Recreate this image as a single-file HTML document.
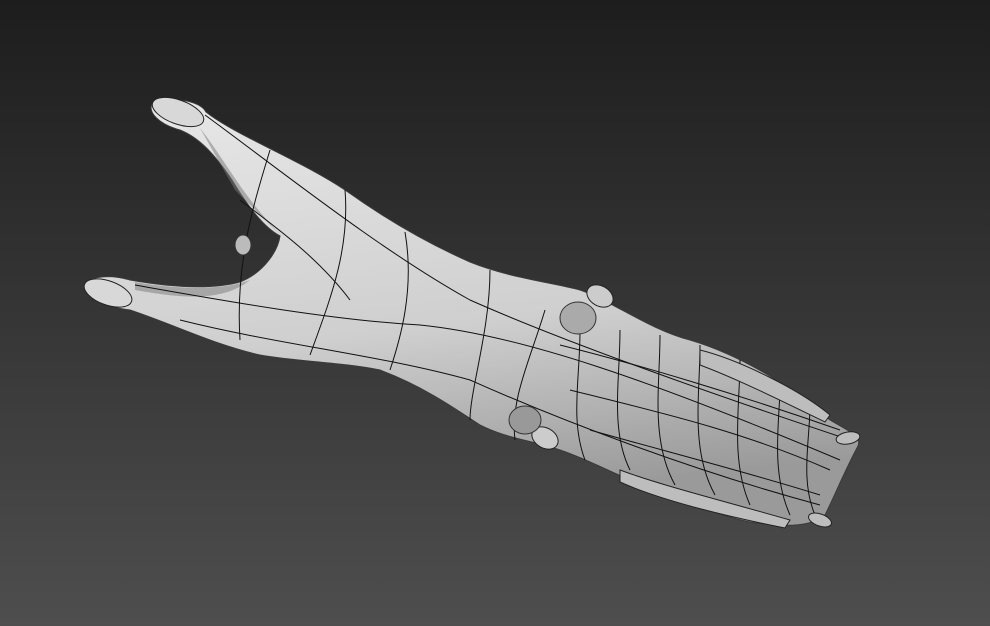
<!DOCTYPE html>
<html><head><meta charset="utf-8"><style>
html,body{margin:0;padding:0;width:990px;height:626px;overflow:hidden;background:#333}
svg{display:block}
</style></head><body>
<svg width="990" height="626" viewBox="0 0 990 626" xmlns="http://www.w3.org/2000/svg">
<defs>
<linearGradient id="bg" x1="0" y1="0" x2="0" y2="1">
<stop offset="0" stop-color="#1d1d1d"/><stop offset="1" stop-color="#4e4e4e"/>
</linearGradient>
<linearGradient id="sk" x1="0" y1="0" x2="0.2" y2="1">
<stop offset="0" stop-color="#e8e8e8"/><stop offset="0.6" stop-color="#cfcfcf"/><stop offset="1" stop-color="#9a9a9a"/>
</linearGradient>
</defs>
<rect width="990" height="626" fill="url(#bg)"/>
<path d="M152,104 C170,96 200,100 206,112 C235,135 300,160 345,190 C380,215 420,240 470,262 C510,278 550,282 580,290 C610,300 650,330 690,340 C740,355 790,385 830,420 C850,432 862,436 858,446 C845,470 835,495 825,515 C810,528 780,527 750,522 C715,515 685,500 650,488 C615,475 590,460 560,450 C530,440 505,438 480,425 C450,405 420,385 380,370 C340,362 300,362 260,355 C215,345 175,325 130,310 C110,308 88,300 84,287 C86,276 110,274 130,280 C170,287 210,290 240,282 C265,272 278,250 280,236 C265,228 250,210 232,180 C215,155 200,138 180,130 C158,124 148,112 152,104 Z" fill="url(#sk)" stroke="#3a3a3a" stroke-width="1"/>
<path d="M200,128 C225,160 245,200 282,236 C270,225 250,205 235,190 Z" fill="#777" opacity="0.5"/>
<path d="M135,282 C180,290 225,290 250,280 C225,300 190,300 135,290 Z" fill="#777" opacity="0.5"/>
<g fill="none" stroke="#111" stroke-width="1">
<path d="M205,115 C280,170 380,250 470,300 C560,340 700,390 850,440"/>
<path d="M135,285 C220,300 330,320 420,325 C520,335 650,380 840,460"/>
<path d="M180,320 C280,345 380,355 470,380 C560,420 690,470 820,505"/>
<path d="M270,150 C255,200 235,260 240,340"/>
<path d="M345,190 C350,250 330,300 310,355"/>
<path d="M405,232 C415,290 400,340 390,370"/>
<path d="M490,270 C490,330 470,390 470,420"/>
<path d="M545,310 C530,360 510,400 515,440"/>
<path d="M580,330 C580,380 570,420 585,460"/>
<path d="M620,330 C620,380 610,430 630,470"/>
<path d="M660,335 C660,385 650,440 675,485"/>
<path d="M700,345 C700,395 690,450 715,495"/>
<path d="M740,360 C740,405 730,460 750,505"/>
<path d="M780,385 C780,420 770,470 790,515"/>
<path d="M810,405 C810,440 800,480 815,515"/>
<path d="M560,345 C640,365 740,395 840,430"/>
<path d="M570,390 C650,410 740,430 830,470"/>
<path d="M590,430 C660,450 740,470 820,495"/>
<path d="M240,200 C280,230 320,260 350,300"/>
</g>
<ellipse cx="178" cy="112" rx="27" ry="12" transform="rotate(20 178 112)" fill="#d8d8d8" stroke="#222"/>
<ellipse cx="108" cy="293" rx="25" ry="12" transform="rotate(20 108 293)" fill="#d8d8d8" stroke="#222"/>
<ellipse cx="243" cy="245" rx="8" ry="10" fill="#bbb" stroke="#333"/>
<ellipse cx="578" cy="318" rx="18" ry="16" fill="#aaa" stroke="#333"/>
<ellipse cx="600" cy="296" rx="14" ry="10" transform="rotate(30 600 296)" fill="#ccc" stroke="#222"/>
<ellipse cx="545" cy="438" rx="14" ry="10" transform="rotate(30 545 438)" fill="#ccc" stroke="#222"/>
<ellipse cx="525" cy="420" rx="16" ry="14" fill="#999" stroke="#333"/>
<g fill="#bdbdbd" stroke="#222">
<path d="M700,350 C740,360 800,390 830,415 L825,422 C790,405 740,380 700,365 Z"/>
<path d="M620,470 C660,485 720,500 790,520 L785,528 C720,515 660,500 620,482 Z"/>
<ellipse cx="848" cy="438" rx="12" ry="6" transform="rotate(-10 848 438)"/>
<ellipse cx="820" cy="520" rx="12" ry="6" transform="rotate(20 820 520)"/>
</g>
</svg>
</body></html>
